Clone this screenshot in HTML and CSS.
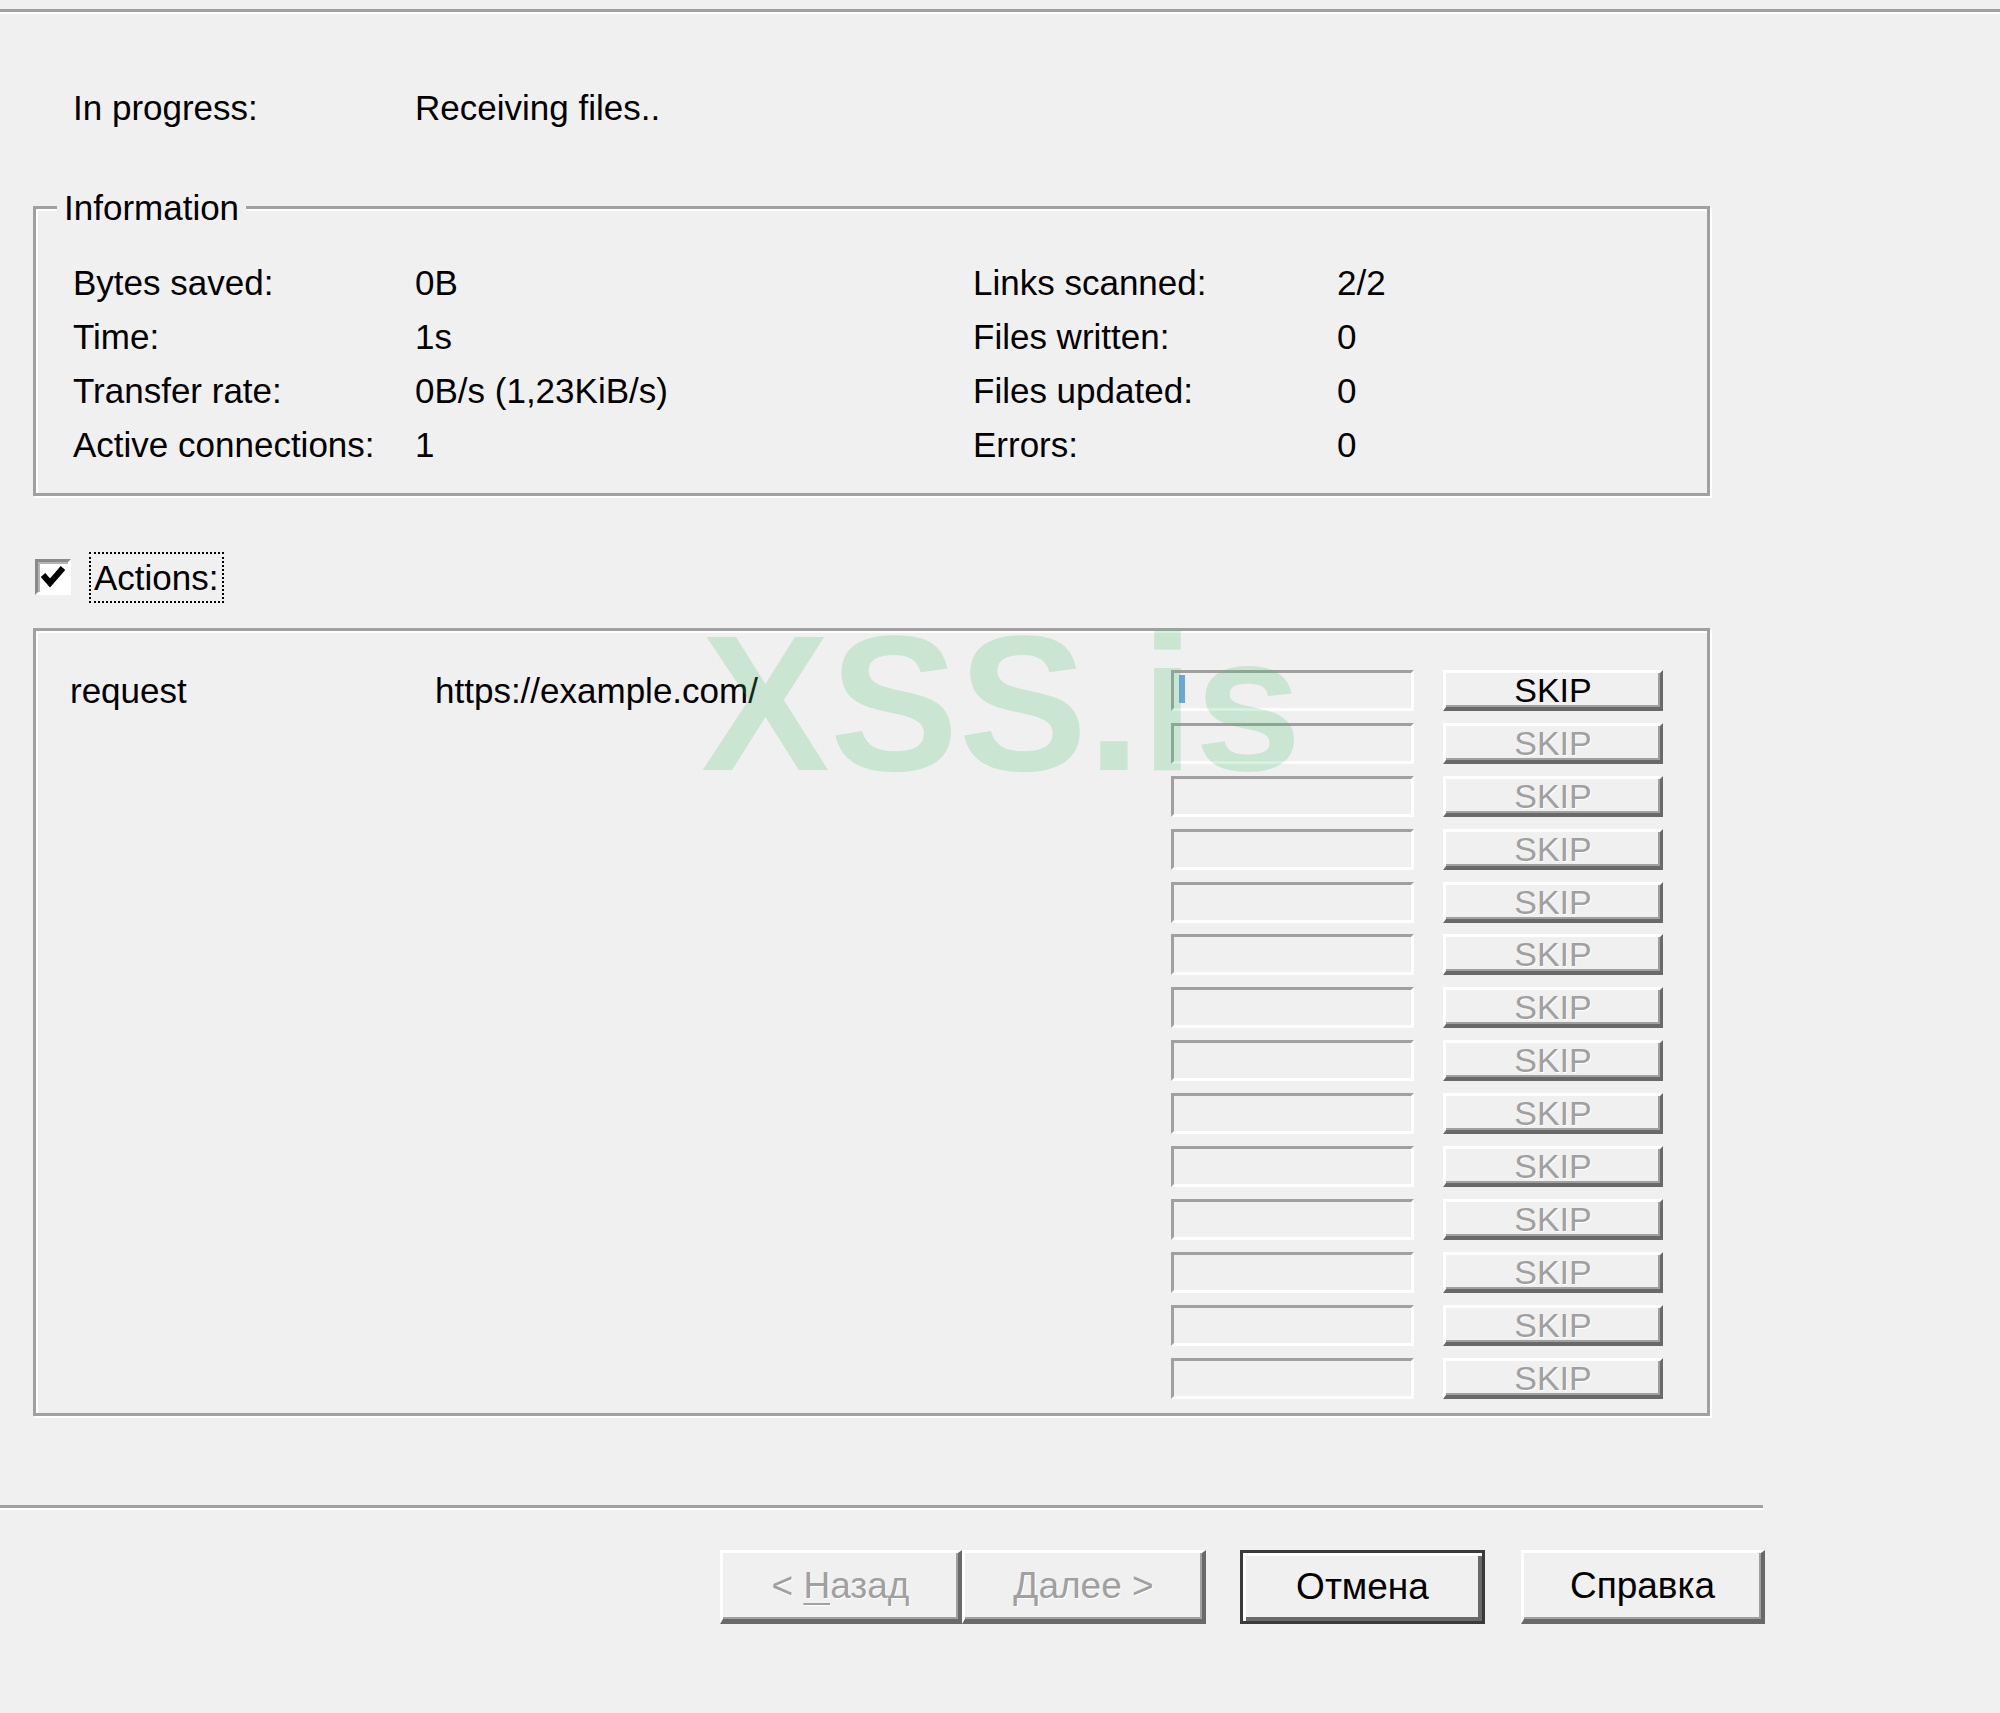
FILE: index.html
```html
<!DOCTYPE html>
<html lang="en">
<head>
<meta charset="utf-8">
<title>Progress</title>
<link rel="stylesheet" href="styles.css">
</head>
<body>
<div class="dialog">
  <div class="rule top-rule"></div>

  <div class="status">
    <span class="status-label">In progress:</span>
    <span>Receiving files..</span>
  </div>

  <div class="group info">
    <div class="legend">Information</div>
    <div class="info-grid">
      <span>Bytes saved:</span><span>0B</span><span>Links scanned:</span><span>2/2</span>
      <span>Time:</span><span>1s</span><span>Files written:</span><span>0</span>
      <span>Transfer rate:</span><span>0B/s (1,23KiB/s)</span><span>Files updated:</span><span>0</span>
      <span>Active connections:</span><span>1</span><span>Errors:</span><span>0</span>
    </div>
  </div>

  <div class="check-row">
    <span class="checkbox">
      <svg viewBox="0 0 30 30" width="30" height="30"><path d="M5 13 L12 21 L25 6" fill="none" stroke="#000" stroke-width="6"/></svg>
    </span>
    <span class="focus-label">Actions:</span>
  </div>

  <div class="group actions">
    <div class="actions-grid">
      <span class="act-label">request</span>
      <span class="act-url">https://example.com/</span>
      <span class="field"><span class="progress"></span></span><span class="btn">SKIP</span>
      <span class="field"></span><span class="btn disabled">SKIP</span>
      <span class="field"></span><span class="btn disabled">SKIP</span>
      <span class="field"></span><span class="btn disabled">SKIP</span>
      <span class="field"></span><span class="btn disabled">SKIP</span>
      <span class="field"></span><span class="btn disabled">SKIP</span>
      <span class="field"></span><span class="btn disabled">SKIP</span>
      <span class="field"></span><span class="btn disabled">SKIP</span>
      <span class="field"></span><span class="btn disabled">SKIP</span>
      <span class="field"></span><span class="btn disabled">SKIP</span>
      <span class="field"></span><span class="btn disabled">SKIP</span>
      <span class="field"></span><span class="btn disabled">SKIP</span>
      <span class="field"></span><span class="btn disabled">SKIP</span>
      <span class="field"></span><span class="btn disabled">SKIP</span>
    </div>
  </div>

  <div class="rule bottom-rule"></div>

  <div class="buttons">
    <span class="wbtn disabled back">&lt; <u>Н</u>азад</span>
    <span class="wbtn disabled next"><u>Д</u>алее &gt;</span>
    <span class="wbtn default cancel">Отмена</span>
    <span class="wbtn help">Справка</span>
  </div>

  <div class="watermark">XSS.is</div>
</div>
</body>
</html>
```

FILE: styles.css
```css
html, body {
  margin: 0;
  padding: 0;
  background: #f0f0f0;
}

.dialog {
  position: relative;
  width: 2000px;
  height: 1713px;
  font-family: "Liberation Sans", Arial, sans-serif;
  font-size: 35px;
  color: #000;
  overflow: hidden;
}

.rule {
  height: 3px;
  background: #a0a0a0;
  border-bottom: 2px solid #ffffff;
}

.top-rule {
  margin-top: 9px;
}

.status {
  display: flex;
  margin-top: 67px;
  padding-left: 73px;
  line-height: 54px;
}

.status-label {
  width: 342px;
}

.group {
  box-sizing: border-box;
  margin-left: 33px;
  width: 1677px;
  border: 3px solid #a0a0a0;
  box-shadow: inset 2px 2px 0 #ffffff, 2px 2px 0 #ffffff;
}

.info {
  margin-top: 71px;
  padding-bottom: 21px;
}

.legend {
  display: block;
  width: max-content;
  margin-top: -28px;
  margin-left: 21px;
  padding: 0 7px;
  line-height: 54px;
  background: #f0f0f0;
}

.info-grid {
  display: grid;
  grid-template-columns: 342px 558px 364px 1fr;
  margin-top: 21px;
  margin-left: 37px;
  line-height: 54px;
}

.check-row {
  display: flex;
  align-items: center;
  height: 54px;
  margin-top: 54px;
  padding-left: 35px;
}

.checkbox {
  box-sizing: border-box;
  width: 36px;
  height: 36px;
  border: 3px solid;
  border-color: #8a8a8a #ffffff #ffffff #8a8a8a;
  box-shadow: inset 2px 2px 0 #b4b4b4;
  background: #ffffff;
  display: flex;
  align-items: center;
  justify-content: center;
}

.checkbox svg {
  display: block;
}

.focus-label {
  margin-left: 18px;
  border: 2px dotted #000;
  padding: 0 3px;
  line-height: 47px;
}

.actions {
  margin-top: 24px;
  padding: 39px 0 14px 34px;
}

.actions-grid {
  display: grid;
  grid-template-columns: 365px 736px 243px 249px;
  grid-auto-rows: 41px;
  row-gap: 11.9px;
}

.act-label,
.act-url {
  line-height: 41px;
  white-space: nowrap;
}

.field {
  grid-column: 3;
  box-sizing: border-box;
  width: 243px;
  height: 41px;
  border: 3px solid;
  border-color: #a0a0a0 #ffffff #ffffff #a0a0a0;
  background: #f0f0f0;
  display: flex;
  align-items: flex-start;
}

.progress {
  width: 6px;
  height: 28px;
  margin: 2px 0 0 5px;
  background: #6aa6dc;
}

.btn {
  grid-column: 4;
  justify-self: end;
  box-sizing: border-box;
  width: 220px;
  height: 41px;
  border-style: solid;
  border-width: 3px 3px 4px 3px;
  border-color: #ffffff #696969 #696969 #ffffff;
  box-shadow: inset -2px -2px 0 #a0a0a0;
  background: #f0f0f0;
  font-size: 34px;
  line-height: 34px;
  text-align: center;
  color: #000;
}

.btn.disabled {
  color: #a0a0a0;
  text-shadow: 1px 1px 0 #ffffff;
}

.bottom-rule {
  width: 1763px;
  margin-top: 89px;
}

.buttons {
  display: flex;
  width: 1765px;
  justify-content: flex-end;
  margin-top: 40px;
}

.wbtn {
  box-sizing: border-box;
  height: 74px;
  border-style: solid;
  border-width: 3px 4px 5px 3px;
  border-color: #ffffff #696969 #696969 #ffffff;
  box-shadow: inset -2px -2px 0 #a0a0a0;
  background: #f0f0f0;
  font-size: 37px;
  line-height: 66px;
  text-align: center;
  color: #000;
}

.wbtn u {
  text-decoration-thickness: 2px;
  text-underline-offset: 5px;
}

.wbtn.disabled {
  color: #a0a0a0;
  text-shadow: 1px 1px 0 #ffffff;
}

.back { width: 242px; }
.next { width: 244px; }
.cancel { width: 245px; margin-left: 34px; }
.help { width: 244px; margin-left: 36px; }

.wbtn.default {
  border: 3px solid #3a3a3a;
  box-shadow: inset 3px 3px 0 #ffffff, inset -4px -4px 0 #696969;
  line-height: 68px;
}

.watermark {
  position: absolute;
  left: 701px;
  top: 607px;
  font-family: "Liberation Sans", Arial, sans-serif;
  font-weight: bold;
  font-size: 193px;
  line-height: 1;
  color: rgba(70, 190, 100, 0.22);
  white-space: nowrap;
  pointer-events: none;
}
```
